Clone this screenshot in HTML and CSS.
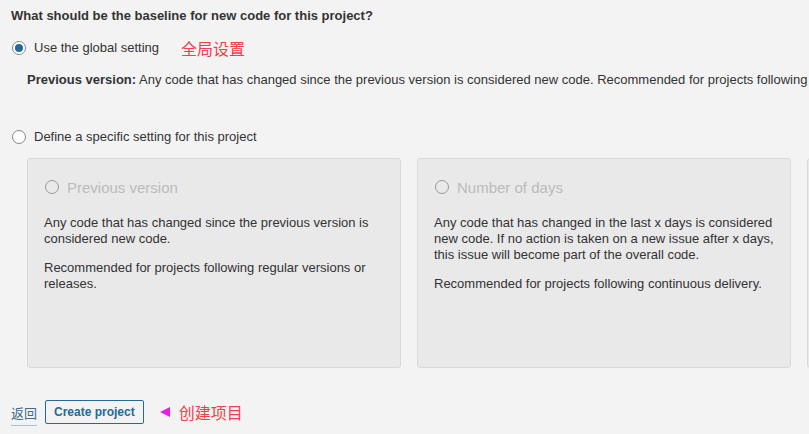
FILE: index.html
```html
<!DOCTYPE html>
<html>
<head>
<meta charset="utf-8">
<link rel="stylesheet" href="styles.css">
</head>
<body>
<div class="page">
  <h3 class="title">What should be the baseline for new code for this project?</h3>
  <div class="radio-row row-global">
    <span class="radio checked"></span>
    <span class="label">Use the global setting</span>
    <span class="annot annot-global">全局设置</span>
  </div>
  <p class="note"><strong>Previous version:</strong> Any code that has changed since the previous version is considered new code. Recommended for projects following regular versions or releases.</p>
  <div class="radio-row row-specific">
    <span class="radio"></span>
    <span class="label">Define a specific setting for this project</span>
  </div>
  <div class="cards">
    <div class="card">
      <div class="card-head"><span class="radio disabled"></span><span class="card-title">Previous version</span></div>
      <p class="card-text">Any code that has changed since the previous version is considered new code.</p>
      <p class="card-text">Recommended for projects following regular versions or releases.</p>
    </div>
    <div class="card">
      <div class="card-head"><span class="radio disabled"></span><span class="card-title">Number of days</span></div>
      <p class="card-text">Any code that has changed in the last x days is considered new code. If no action is taken on a new issue after x days, this issue will become part of the overall code.</p>
      <p class="card-text">Recommended for projects following continuous delivery.</p>
    </div>
    <div class="card"></div>
  </div>
  <div class="footer">
    <a class="back" href="#">返回</a>
    <button class="btn">Create project</button>
    <span class="arrow"></span>
    <span class="annot">创建项目</span>
  </div>
</div>
</body>
</html>
```
FILE: styles.css
```css
html, body {
  margin: 0;
  padding: 0;
  background: #f3f3f3;
  overflow: hidden;
}
body {
  width: 809px;
  height: 434px;
  font-family: "Liberation Sans", Arial, "Noto Sans CJK SC", sans-serif;
  font-size: 13px;
  color: #333;
}
.page {
  padding: 8px 0 0 11px;
}
.title {
  margin: 0;
  font-size: 13px;
  line-height: 16px;
  font-weight: bold;
  color: #333;
}
.radio-row {
  display: flex;
  align-items: center;
  height: 16px;
  line-height: 16px;
  white-space: nowrap;
}
.row-global {
  margin-top: 16px;
}
.row-specific {
  margin-top: 41px;
}
.label {
  margin-left: 8px;
}
.radio {
  box-sizing: border-box;
  width: 14px;
  height: 14px;
  border: 1px solid #888;
  border-radius: 50%;
  background: #fff;
  display: inline-flex;
  align-items: center;
  justify-content: center;
  flex-shrink: 0;
  margin-left: 1px;
}
.radio.checked::after {
  content: "";
  width: 8px;
  height: 8px;
  border-radius: 50%;
  background: #236a97;
}
.radio.disabled {
  border-color: #999;
  background: transparent;
  width: 14px;
  height: 14px;
  margin-left: 0;
}
.annot {
  font-family: "Noto Sans CJK SC", sans-serif;
  font-size: 16px;
  color: #f2404a;
}
.annot-global {
  margin-left: 22px;
}
.note {
  margin: 16px 0 0 16px;
  line-height: 16px;
  white-space: nowrap;
}
.note strong {
  font-weight: bold;
}
.cards {
  display: flex;
  gap: 16px;
  margin: 13px 0 0 16px;
}
.card {
  box-sizing: border-box;
  flex-shrink: 0;
  width: 374px;
  height: 210px;
  background: #e9e9e9;
  border: 1px solid #d9d9d9;
  border-radius: 3px;
  padding: 18px 16px 0 16px;
}
.card-head {
  display: flex;
  align-items: center;
  height: 20px;
  padding-left: 1px;
  white-space: nowrap;
}
.card-title {
  margin-left: 8px;
  font-size: 15px;
  color: #bbb;
}
.card-text {
  margin: 0;
  line-height: 16px;
  color: #333;
}
.card-head + .card-text {
  margin-top: 18px;
}
.card-text + .card-text {
  margin-top: 13px;
}
.footer {
  display: flex;
  align-items: center;
  margin-top: 32px;
  height: 24px;
}
.back {
  color: #3e6b8e;
  text-decoration: none;
  font-size: 13px;
  line-height: 16px;
  border-bottom: 1px solid #a9c3d6;
  margin-top: 8px;
  padding-bottom: 3px;
}
.btn {
  margin-left: 8px;
  box-sizing: border-box;
  height: 24px;
  padding: 0 8px;
  border: 1px solid #236a97;
  border-radius: 2px;
  background: transparent;
  color: #236a97;
  font-family: "Liberation Sans", Arial, sans-serif;
  font-size: 12px;
  font-weight: bold;
}
.arrow {
  width: 0;
  height: 0;
  margin-left: 16px;
  margin-right: 9px;
  border-top: 5px solid transparent;
  border-bottom: 5px solid transparent;
  border-right: 10px solid #e81ee8;
}
```
